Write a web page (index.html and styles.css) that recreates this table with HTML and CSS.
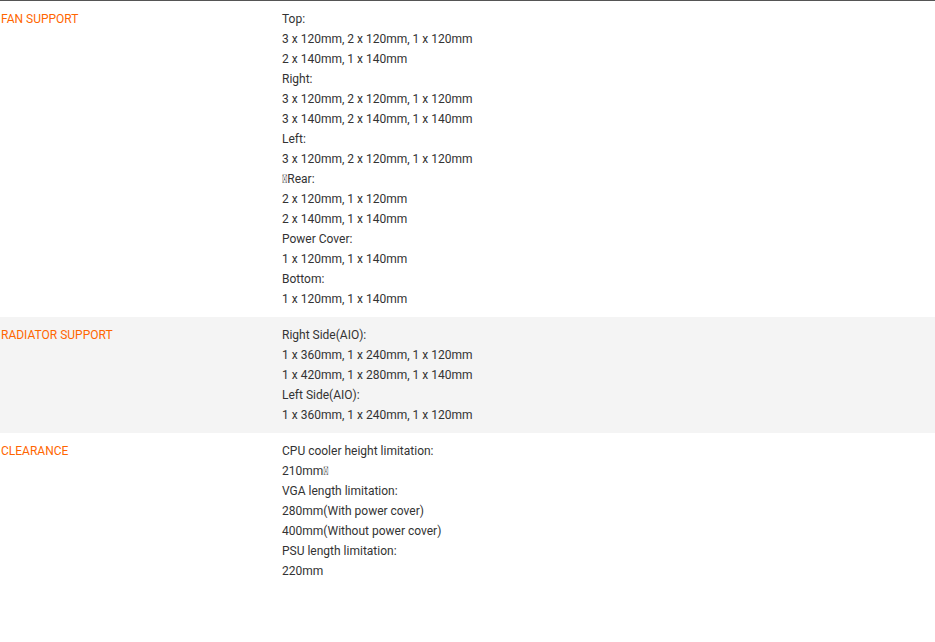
FILE: index.html
```html
<!DOCTYPE html>
<html>
<head>
<meta charset="utf-8">
<link rel="stylesheet" href="styles.css">
</head>
<body>
<div class="specs">
  <div class="row">
    <div class="label">FAN SUPPORT</div>
    <div class="value">
      <div>Top:</div>
      <div>3 x 120mm, 2 x 120mm, 1 x 120mm</div>
      <div>2 x 140mm, 1 x 140mm</div>
      <div>Right:</div>
      <div>3 x 120mm, 2 x 120mm, 1 x 120mm</div>
      <div>3 x 140mm, 2 x 140mm, 1 x 140mm</div>
      <div>Left:</div>
      <div>3 x 120mm, 2 x 120mm, 1 x 120mm</div>
      <div>&#xE000;Rear:</div>
      <div>2 x 120mm, 1 x 120mm</div>
      <div>2 x 140mm, 1 x 140mm</div>
      <div>Power Cover:</div>
      <div>1 x 120mm, 1 x 140mm</div>
      <div>Bottom:</div>
      <div>1 x 120mm, 1 x 140mm</div>
    </div>
  </div>
  <div class="row alt">
    <div class="label">RADIATOR SUPPORT</div>
    <div class="value">
      <div>Right Side(AIO):</div>
      <div>1 x 360mm, 1 x 240mm, 1 x 120mm</div>
      <div>1 x 420mm, 1 x 280mm, 1 x 140mm</div>
      <div>Left Side(AIO):</div>
      <div>1 x 360mm, 1 x 240mm, 1 x 120mm</div>
    </div>
  </div>
  <div class="row">
    <div class="label">CLEARANCE</div>
    <div class="value">
      <div>CPU cooler height limitation:</div>
      <div>210mm&#xE000;</div>
      <div>VGA length limitation:</div>
      <div>280mm(With power cover)</div>
      <div>400mm(Without power cover)</div>
      <div>PSU length limitation:</div>
      <div>220mm</div>
    </div>
  </div>
</div>
</body>
</html>
```
FILE: styles.css
```css
html, body {
  margin: 0;
  padding: 0;
  background: #fff;
}
body {
  font-family: Roboto, "Liberation Sans", sans-serif;
  font-size: 12px;
  line-height: 20px;
  color: #333;
}
.specs {
  border-top: 1px solid #555;
}
.row {
  display: grid;
  grid-template-columns: 281px 1fr;
  padding: 8px 0 8px 1px;
}
.row.alt {
  background: #f4f4f4;
}
.label {
  color: #f60;
}
```
